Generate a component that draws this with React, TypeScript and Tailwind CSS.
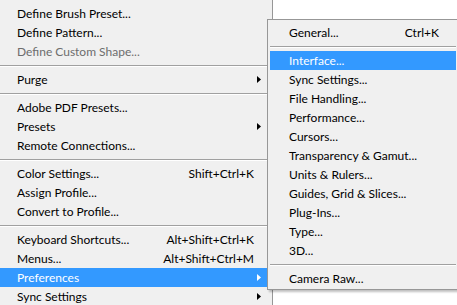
const font = { fontFamily: 'Lato, "Open Sans", sans-serif' };

type Item =
  | { sep: true }
  | {
      sep?: false;
      label: string;
      shortcut?: string;
      sub?: boolean;
      disabled?: boolean;
      active?: boolean;
    };

const mainItems: Item[] = [
  { label: "Define Brush Preset..." },
  { label: "Define Pattern..." },
  { label: "Define Custom Shape...", disabled: true },
  { sep: true },
  { label: "Purge", sub: true },
  { sep: true },
  { label: "Adobe PDF Presets..." },
  { label: "Presets", sub: true },
  { label: "Remote Connections..." },
  { sep: true },
  { label: "Color Settings...", shortcut: "Shift+Ctrl+K" },
  { label: "Assign Profile..." },
  { label: "Convert to Profile..." },
  { sep: true },
  { label: "Keyboard Shortcuts...", shortcut: "Alt+Shift+Ctrl+K" },
  { label: "Menus...", shortcut: "Alt+Shift+Ctrl+M" },
  { label: "Preferences", sub: true, active: true },
  { label: "Sync Settings", sub: true },
];

const subItems: Item[] = [
  { label: "General...", shortcut: "Ctrl+K" },
  { sep: true },
  { label: "Interface...", active: true },
  { label: "Sync Settings..." },
  { label: "File Handling..." },
  { label: "Performance..." },
  { label: "Cursors..." },
  { label: "Transparency & Gamut..." },
  { label: "Units & Rulers..." },
  { label: "Guides, Grid & Slices..." },
  { label: "Plug-Ins..." },
  { label: "Type..." },
  { label: "3D..." },
  { sep: true },
  { label: "Camera Raw..." },
];

function Arrow({ white }: { white?: boolean }) {
  return (
    <svg width="4" height="7" viewBox="0 0 4 7" className="shrink-0">
      <path d="M0 0 L4 3.5 L0 7 Z" fill={white ? "#ffffff" : "#000000"} />
    </svg>
  );
}

function Separator({ inset }: { inset?: boolean }) {
  return (
    <div className={`h-[9px] flex flex-col justify-center ${inset ? "px-[2px]" : ""}`}>
      <div className="h-px bg-[#a0a0a0]" />
      <div className="h-px bg-white" />
    </div>
  );
}

function MenuRow({ item, sub }: { item: Exclude<Item, { sep: true }>; sub?: boolean }) {
  const color = item.active
    ? "text-white"
    : item.disabled
      ? "text-[#6d6d6d]"
      : "text-black";
  return (
    <div
      className={`h-[19px] flex items-center text-[12px] ${color} ${
        item.active ? "bg-[#3399ff]" : ""
      } ${sub ? "ml-[2px] mr-[2px] pl-[19px] pr-[17px]" : "pl-[17px] pr-[11px]"}`}
    >
      <span className="flex-1 whitespace-nowrap">{item.label}</span>
      {item.shortcut && <span className="whitespace-nowrap">{item.shortcut}</span>}
      {!sub && (
        <span className="w-[7px] flex justify-end">
          {item.sub && <Arrow white={item.active} />}
        </span>
      )}
    </div>
  );
}

export default function App() {
  return (
    <div className="relative w-[457px] h-[305px] bg-white overflow-hidden" style={font}>
      <div className="w-[273px] h-[305px] bg-[#f0f0f0] border-r border-[#979797] pt-[4px]">
        {mainItems.map((it, i) =>
          it.sep ? <Separator key={i} /> : <MenuRow key={i} item={it} />
        )}
      </div>

      <div className="absolute left-[267px] top-[19px] w-[192px] h-[271px] bg-[#f0f0f0] border border-[#979797] shadow-[2px_2px_2px_rgba(0,0,0,0.25)] pt-[3px]">
        {subItems.map((it, i) =>
          it.sep ? <Separator key={i} inset /> : <MenuRow key={i} item={it} sub />
        )}
      </div>
    </div>
  );
}
